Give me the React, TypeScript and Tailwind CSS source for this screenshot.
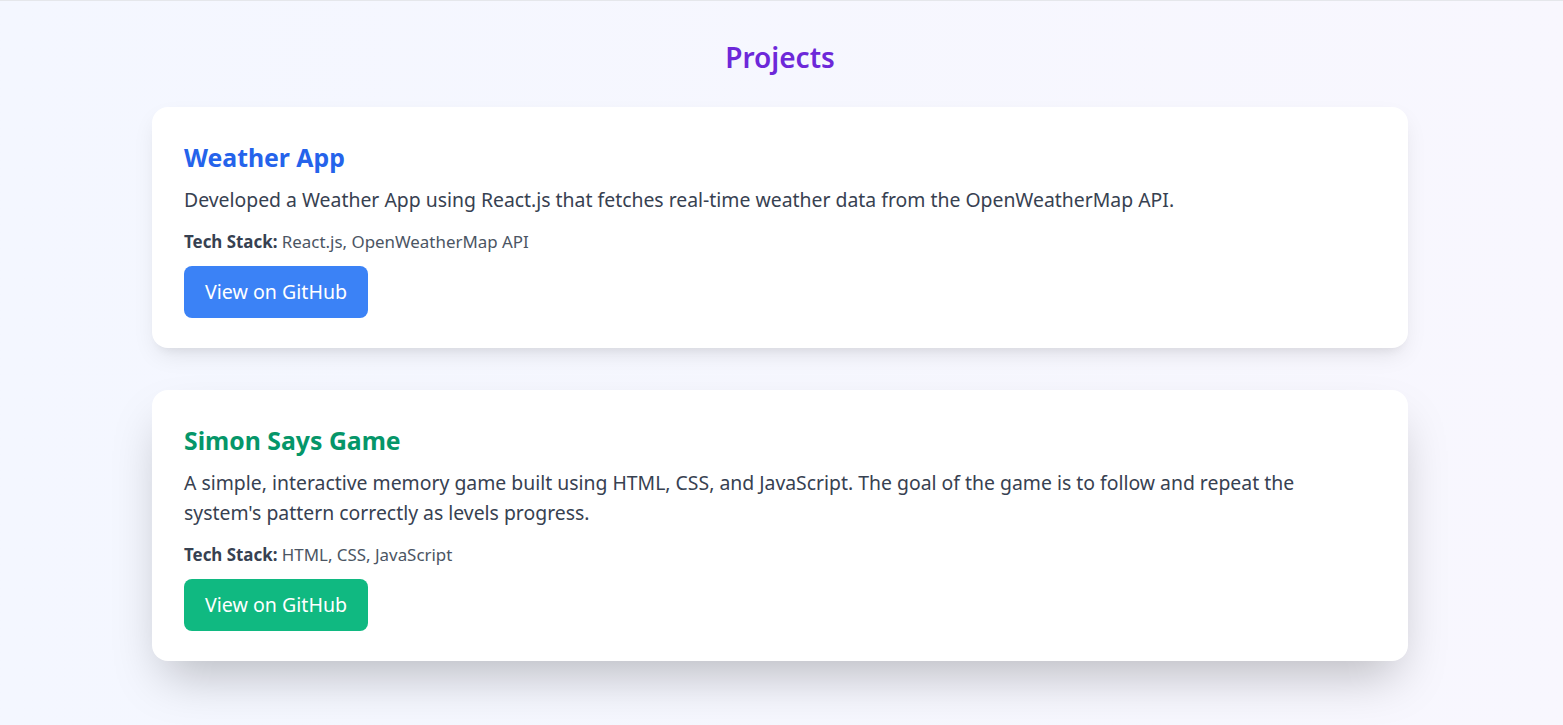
const projects = [
  {
    title: 'Weather App',
    description:
      'Developed a Weather App using React.js that fetches real-time weather data from the OpenWeatherMap API.',
    stack: 'React.js, OpenWeatherMap API',
    titleColor: 'text-[#2563eb]',
    button: 'bg-[#3b82f6]',
    shadow: 'shadow-[0_10px_25px_-5px_rgba(0,0,0,0.1),0_8px_10px_-6px_rgba(0,0,0,0.06)]',
  },
  {
    title: 'Simon Says Game',
    description:
      "A simple, interactive memory game built using HTML, CSS, and JavaScript. The goal of the game is to follow and repeat the system's pattern correctly as levels progress.",
    stack: 'HTML, CSS, JavaScript',
    titleColor: 'text-[#059669]',
    button: 'bg-[#10b981]',
    shadow: 'shadow-[0_25px_50px_-12px_rgba(0,0,0,0.25)]',
  },
]

export default function App() {
  return (
    <main
      className="min-h-[725px] border-t border-[#e5e7eb] bg-gradient-to-r from-[#f4f7ff] to-[#f8f7fe] pb-16 pl-[152px] pr-[155px] pt-[38px]"
      style={{ fontFamily: '"Noto Sans", "Open Sans", sans-serif' }}
    >
      <h1 className="mb-8 text-center text-[28px] font-semibold leading-9 text-[#6d28d9]">Projects</h1>

      <div className="space-y-[42px]">
        {projects.map((project) => (
          <article key={project.title} className={`rounded-2xl bg-white px-8 pb-[30px] pt-[34px] ${project.shadow}`}>
            <h2 className={`mb-3 text-[24.8px] font-bold leading-8 ${project.titleColor}`}>{project.title}</h2>
            <p className="mb-4 text-[19.4px] leading-[29.25px] text-[#374151]">{project.description}</p>
            <p className="mb-3 text-[16.9px] leading-6 text-[#4b5563]">
              <span className="font-bold text-[#374151]">Tech Stack:</span> {project.stack}
            </p>
            <a
              href="#"
              className={`inline-block rounded-lg px-[21px] py-3 text-[19.6px] leading-7 text-white ${project.button}`}
            >
              View on GitHub
            </a>
          </article>
        ))}
      </div>
    </main>
  )
}
